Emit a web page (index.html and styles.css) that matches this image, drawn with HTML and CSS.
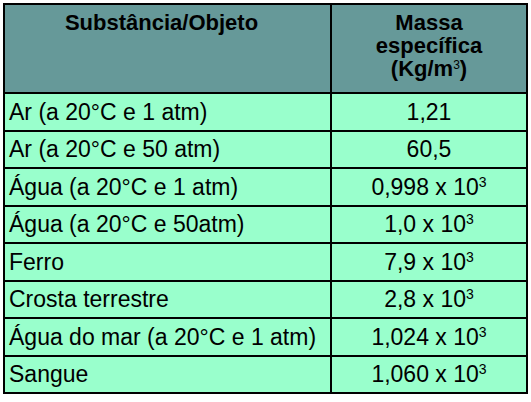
FILE: index.html
```html
<!DOCTYPE html>
<html lang="pt">

<head>
	<meta charset="UTF-8">
	<meta name="viewport" content="width=device-width, initial-scale=1.0">
	<title>Massa específica</title>
	<link rel="stylesheet" href="styles.css">
</head>

<body>
	<table class="density-table">
		<thead>
			<tr>
				<th class="col-name">Substância/Objeto</th>
				<th class="col-value">Massa<br>específica<br>(Kg/m<sup>3</sup>)</th>
			</tr>
		</thead>
		<tbody>
			<tr>
				<td>Ar (a 20°C e 1 atm)</td>
				<td class="value">1,21</td>
			</tr>
			<tr>
				<td>Ar (a 20°C e 50 atm)</td>
				<td class="value">60,5</td>
			</tr>
			<tr>
				<td>Água (a 20°C e 1 atm)</td>
				<td class="value">0,998 x 10<sup>3</sup></td>
			</tr>
			<tr>
				<td>Água (a 20°C e 50atm)</td>
				<td class="value">1,0 x 10<sup>3</sup></td>
			</tr>
			<tr>
				<td>Ferro</td>
				<td class="value">7,9 x 10<sup>3</sup></td>
			</tr>
			<tr>
				<td>Crosta terrestre</td>
				<td class="value">2,8 x 10<sup>3</sup></td>
			</tr>
			<tr>
				<td>Água do mar (a 20°C e 1 atm)</td>
				<td class="value">1,024 x 10<sup>3</sup></td>
			</tr>
			<tr>
				<td>Sangue</td>
				<td class="value">1,060 x 10<sup>3</sup></td>
			</tr>
		</tbody>
	</table>
</body>

</html>
```

FILE: styles.css
```css
body {
	margin: 3px;
	background-color: #ffffff;
	font-family: "Liberation Sans", Arial, sans-serif;
}

.density-table {
	border-collapse: collapse;
	width: 525px;
	color: #000000;
}

.density-table th,
.density-table td {
	border: 2px solid #000000;
	padding: 0 4px;
}

.density-table th {
	background-color: #669999;
	font-size: 22px;
	font-weight: bold;
	line-height: 23px;
	height: 81px;
	vertical-align: top;
	padding-top: 6px;
	padding-bottom: 0;
}

.density-table th.col-name {
	padding-right: 16px;
}

.density-table td {
	background-color: #99ffcc;
	font-size: 23px;
	height: 35.5px;
	line-height: 26px;
}

.col-name {
	width: 305px;
}

.value {
	text-align: center;
}

sup {
	font-size: 14px;
	line-height: 0;
	vertical-align: 8px;
}

.col-value sup {
	font-size: 12px;
	font-weight: normal;
	vertical-align: 7px;
}
```
